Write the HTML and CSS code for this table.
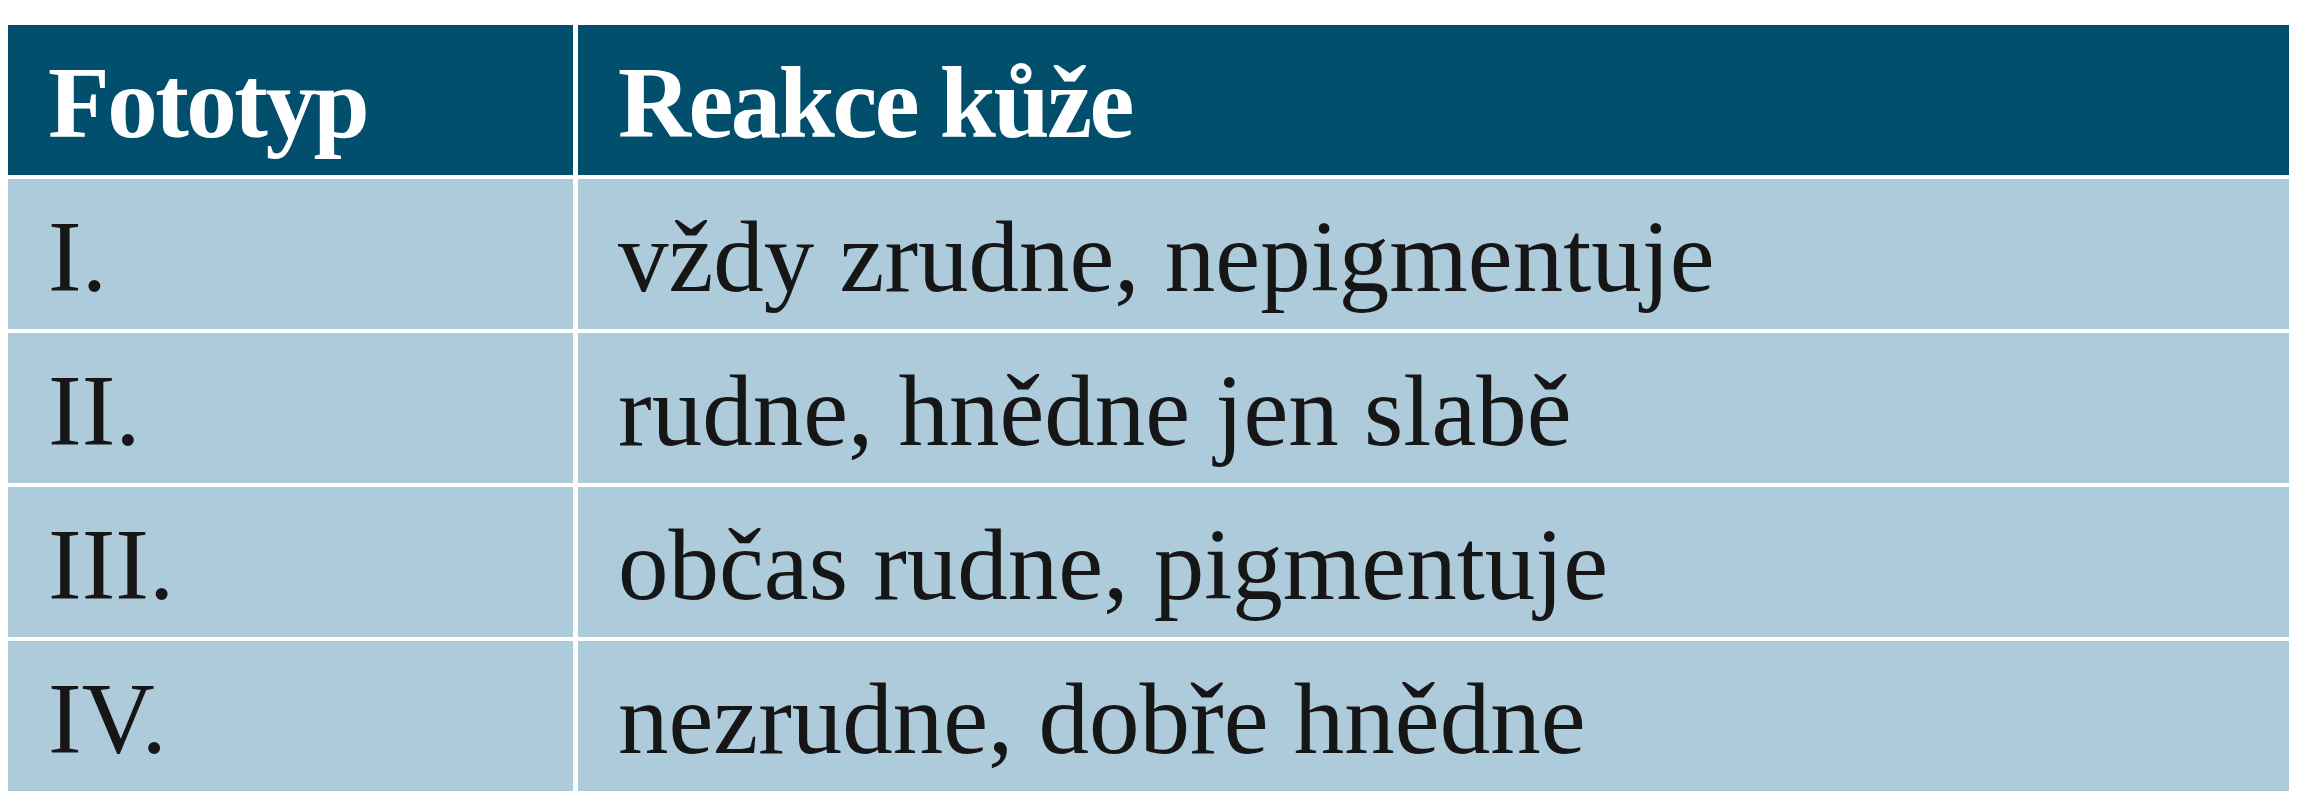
FILE: index.html
```html
<!DOCTYPE html>
<html lang="cs">
<head>
<meta charset="utf-8">
<title>Fototyp</title>
<link rel="stylesheet" href="styles.css">
</head>
<body>
<div class="table">
  <div class="cell head">Fototyp</div>
  <div class="cell head">Reakce kůže</div>
  <div class="cell">I.</div>
  <div class="cell">vždy zrudne, nepigmentuje</div>
  <div class="cell">II.</div>
  <div class="cell">rudne, hnědne jen slabě</div>
  <div class="cell">III.</div>
  <div class="cell">občas rudne, pigmentuje</div>
  <div class="cell">IV.</div>
  <div class="cell">nezrudne, dobře hnědne</div>
</div>
</body>
</html>
```

FILE: styles.css
```css
html, body {
  background: #ffffff;
}
body {
  margin: 8px;
  padding-top: 17px;
  font-family: "Liberation Serif", "Times New Roman", serif;
}
.table {
  display: grid;
  width: 2281px;
  grid-template-columns: 565px 1fr;
  grid-auto-rows: 150px;
  column-gap: 5px;
  row-gap: 4px;
}
.cell {
  display: flex;
  align-items: center;
  box-sizing: border-box;
  padding: 6px 0 0 40px;
  background: #aecbdc;
  color: #161616;
  font-size: 101px;
  line-height: 115px;
  white-space: nowrap;
}
.head {
  background: #024f6d;
  color: #ffffff;
  font-weight: bold;
  letter-spacing: -2.5px;
}
```
